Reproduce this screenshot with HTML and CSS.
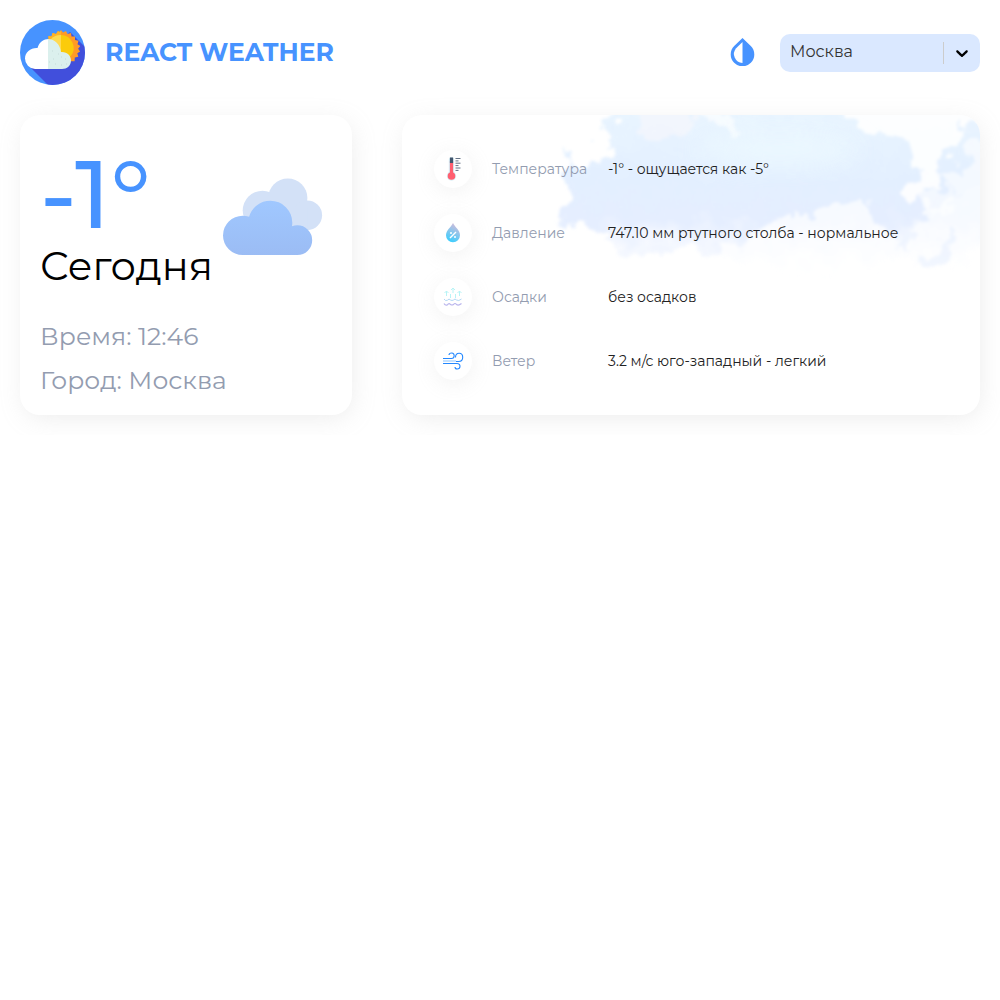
FILE: index.html
```html
<!DOCTYPE html>
<html lang="ru">
<head>
<meta charset="utf-8">
<title>React Weather</title>
<link rel="stylesheet" href="styles.css">
</head>
<body>
<header class="header">
  <div class="brand">
    <svg class="logo" viewBox="0 0 65 65">
      <defs><clipPath id="disc"><circle cx="32.5" cy="32.5" r="32.5"/></clipPath></defs>
      <g clip-path="url(#disc)">
        <rect width="65" height="65" fill="#4793ff"/>
        <path d="M11 48 28 65H65V27L50 12Z" fill="#414fdc"/>
        <path d="M41 10l2 2.500 3-1.500 1.500 3 3.500-1 .5 3.500 3.500 0 0 3.500 3.500.8-1 3.500 2.800 1.800-2.200 2.700 2 2.700-2.800 1.800 1 3.500-3.500.8-.2 3.700H28.500V16l3 .5 1-3.500 3.500 1 2-3 2 1Z" fill="#ff9b26"/>
        <path d="M41 10V30H28.500V16l3 .5 1-3.500 3.500 1 2-3 2 1Z" fill="#ffb327"/>
        <path d="M41 15a13 13 0 0 1 9.500 21.500L37 38Z" fill="#fbcb0b"/>
        <path d="M31 19A13 13 0 0 1 41 15V32H29Z" fill="#ffda52"/>
        <path d="M15 49A10.500 10.500 0 0 1 5 38.500C5 32 11 27.500 17.500 28 19 22 24 19 28.500 19V49Z" fill="#fff"/>
        <path d="M28 19c7 0 12 5.500 13 13 6-.5 10 3.500 10 8.500S47 49 42 49H28Z" fill="#dbf0ed"/>
        <path d="M32 31h1m5 3h1m-6 5h1m7-2h1m3 2h1m-11 5h1m-7-2h1m11 3h1m4-1h1" stroke="#c5dcd9" stroke-width="1"/>
      </g>
    </svg>
    <h1 class="title">REACT WEATHER</h1>
  </div>
  <div class="controls">
    <svg class="drop" viewBox="0 0 24 28"><path d="M12 0 20.300 8.100A11.800 11.800 0 1 1 3.700 8.100Z" fill="#4793ff"/><path d="M12 4V25A9 9 0 0 1 5.600 10.200Z" fill="#fff"/></svg>
    <div class="select">
      <span class="select-value">Москва</span>
      <span class="separator"></span>
      <span class="arrow"><svg width="20" height="20" viewBox="0 0 20 20"><path d="M4.516 7.548c.436-.446 1.043-.481 1.576 0L10 11.295l3.908-3.747c.533-.481 1.141-.446 1.574 0 .436.445.408 1.197 0 1.615-.406.418-4.695 4.502-4.695 4.502a1.095 1.095 0 0 1-1.576 0S4.924 9.581 4.516 9.163s-.436-1.170 0-1.615z"/></svg></span>
    </div>
  </div>
</header>
<main class="main">
  <section class="card today">
    <div class="top">
      <div class="reading">
        <div class="temp">-1°</div>
        <div class="day">Сегодня</div>
      </div>
      <svg class="clouds" viewBox="0 0 100 78">
        <defs>
          <linearGradient id="cloud" x1="0" y1="0" x2="0" y2="1"><stop stop-color="#a0c8ff"/><stop offset="1" stop-color="#9bbcf4"/></linearGradient>
          <clipPath id="front"><circle cx="19.700" cy="57.400" r="19.700"/><circle cx="47.300" cy="44.700" r="22"/><circle cx="74.300" cy="62.200" r="14.900"/><path d="M19.700 77.100V52H74.300V77.100Z"/></clipPath>
        </defs>
        <g fill="#d3e1f7"><circle cx="39.500" cy="32.500" r="19.800"/><circle cx="64.800" cy="20" r="19.600"/><circle cx="84.200" cy="37.300" r="14.900"/><path d="M40 30H84.200V52.200H40Z"/></g>
        <rect y="22" width="90" height="56" fill="url(#cloud)" clip-path="url(#front)"/>
      </svg>
    </div>
    <div class="meta time">Время: 12:46</div>
    <div class="meta city">Город: Москва</div>
  </section>
  <section class="card details">
    <svg class="sky" viewBox="0 0 430 185">
      <defs>
        <linearGradient id="air" x1="0" y1="0" x2="0" y2="1"><stop stop-color="#eaf6ff"/><stop offset=".45" stop-color="#e3efff"/><stop offset=".68" stop-color="#e5eeff"/><stop offset=".82" stop-color="#f3f7ff"/><stop offset=".95" stop-color="#fdfeff"/></linearGradient>
        <filter id="ragged" x="-10%" y="-20%" width="120%" height="140%" color-interpolation-filters="sRGB"><feTurbulence type="fractalNoise" baseFrequency=".055" numOctaves="5" seed="12"/><feDisplacementMap in="SourceGraphic" scale="36" xChannelSelector="R" yChannelSelector="G"/><feGaussianBlur stdDeviation="1.700"/></filter>
        <filter id="soft" x="-30%" y="-60%" width="160%" height="220%"><feGaussianBlur stdDeviation="12"/></filter>
      </defs>
      <g filter="url(#ragged)">
        <path d="M70-15H445V125L405 158 350 142 300 158 235 160 180 142 150 132 110 134 70 138 50 112 8 108 20 84 12 34 26 42 40 56 62 43 54 25Z" fill="url(#air)"/>
        <path d="M276-15 305 8 330 20 352 26 362 38 366 61 354 78 366 88 392 65 400 30 430 8V-15Z" fill="#fff" opacity=".88"/>
        <path d="M78-15 88 4 84 18 100 26 128 24 135 5 145 2 155-15Z" fill="#fcf8fc" opacity=".5"/>
        <path d="M148-15 155 4 170 15 190 24 200 15 181 2 165-15Z" fill="#fff" opacity=".65"/>
        <path d="M210 114 250 98 265 100 285 88 318 80 325 109 340 120 366 106 382 92 400 82 445 70V175H180L188 145 160 138Z" fill="#fff" opacity=".68"/>
        <path d="M410 32 445 18V75L407 78 395 62 423 50Z" fill="#fff" opacity=".6"/>
        <path d="M365 85 400 70 410 85 380 100Z" fill="#fff" opacity=".55"/>
        <path d="M345 95 368 104 360 136 345 125ZM376 140 405 115 400 148 382 156Z" fill="#e8f0ff" opacity=".6"/>
        <path d="M415 8 425 20 440 28V10Z" fill="#e8f3ff"/>
      </g>
      <ellipse cx="230" cy="35" rx="80" ry="17" fill="#edfaff" opacity=".75" filter="url(#soft)"/>
    </svg>
    <div class="rows">
      <div class="row">
        <span class="icon"><svg width="22" height="26" viewBox="0 0 22 26"><path d="M9.500 4v16" stroke="#d9eff7" stroke-width="5.400" stroke-linecap="round"/><circle cx="9.500" cy="20" r="4.700" fill="#d9eff7"/><path d="M9.500 5v15" stroke="#ff5f70" stroke-width="3.200"/><circle cx="9.500" cy="20" r="3.800" fill="#ff5f70"/><path d="M9.500 1.500v5.500" stroke="#42566d" stroke-width="3.200"/><path d="M13.500 2.500h5m-5 2.400h3m-3 2.300h5m-5 2.400h3m-3 2.400h5m-5 2.400h3" stroke="#657386"/></svg></span>
        <span class="name">Температура</span><span class="value">-1° - ощущается как -5°</span>
      </div>
      <div class="row">
        <span class="icon"><svg width="16" height="20" viewBox="0 0 16 20"><defs><linearGradient id="water" x1=".7" y1="0" x2=".3" y2="1"><stop stop-color="#d7bad9"/><stop offset=".5" stop-color="#87c6ed"/><stop offset="1" stop-color="#37ceff"/></linearGradient></defs><path d="M8 0c2 4 7 7.500 7 12.200a7 7 0 0 1-14 0C1 7.500 6 4 8 0Z" fill="url(#water)"/><path d="m5 15 6-6M5 10h2m2 4h2" stroke="#fff" stroke-width="1.400"/></svg></span>
        <span class="name">Давление</span><span class="value">747.10 мм ртутного столба - нормальное</span>
      </div>
      <div class="row">
        <span class="icon"><svg width="20" height="20" viewBox="0 0 20 20" fill="none"><path d="M3.500 9V4m-2 2 2-2 2 2M10 6V1M8 3l2-2 2 2m4.500 6V4m-2 2 2-2 2 2M7.500 11V7m5 4V7" stroke="#b8f4f6"/><path d="M1 12q1.500 2.500 3.500 1.200Q6 11 7.500 13q1.500 1 3 0Q12 11 13.500 13q2 1.500 5-1" stroke="#b3d7f4"/><path d="M1 16.500q1.500 2.500 3.500 1.200Q6 15.500 7.500 17.500q1.500 1 3 0 1.500-2 3 0 2 1.500 5-1" stroke="#bbb7ed" stroke-width="1.200"/></svg></span>
        <span class="name">Осадки</span><span class="value">без осадков</span>
      </div>
      <div class="row">
        <span class="icon"><svg width="22" height="20" viewBox="0 0 22 20" fill="none"><path d="M1 10h13" stroke="#b1d7ff" stroke-width="1.500"/><path d="M1 7.500h8.500c3.500 0 3.500-5.500.3-5.500-1.800 0-2.800 1-2.800 2M13.500 6.500c0-5.800 7.200-5.500 7.200-.3 0 2.500-1.700 4.300-4.200 4.300H14M1 12.500h14c4.200 0 3.700 5.500.2 5.500-1.600 0-2.200-1-2.200-2" stroke="#2488ff" stroke-width="1.100"/></svg></span>
        <span class="name">Ветер</span><span class="value">3.2 м/с юго-западный - легкий</span>
      </div>
    </div>
  </section>
</main>
</body>
</html>
```
FILE: styles.css
```css
* { box-sizing: border-box; }
body { margin: 0; padding: 20px; background: #fff; color: #000; font-family: Montserrat, Inter, sans-serif; }
.header { display: flex; align-items: center; justify-content: space-between; height: 65px; }
.brand { display: flex; align-items: center; gap: 20px; }
.logo { width: 65px; height: 65px; }
.title { margin: 0; padding-bottom: 1px; color: #4793ff; font-size: 25px; line-height: 30px; font-weight: 700; white-space: nowrap; }
.controls { display: flex; align-items: center; gap: 25px; }
.drop { width: 25px; height: 28px; margin-bottom: 2px; }
.select { display: flex; align-items: center; width: 200px; height: 38px; padding-left: 10px; border-radius: 10px; background: #dae8ff; }
.select-value { flex: 1; padding-bottom: 3px; color: #333; font-size: 16px; font-weight: 400; }
.separator { width: 1px; height: 22px; background: #ccc; }
.arrow { display: flex; justify-content: center; width: 36px; }
.arrow svg { width: 20px; height: 20px; }
.main { display: flex; gap: 50px; margin-top: 30px; }
.card { height: 300px; border-radius: 20px; background: #fff; box-shadow: 2px 5px 25px -3px rgba(180,180,180,.25); }
.today { width: 332px; padding: 20px; white-space: nowrap; }
.top { display: flex; justify-content: space-between; height: 162px; }
.reading { width: 174px; }
.temp { height: 110px; color: #4793ff; font-size: 96px; line-height: 117px; font-weight: 500; }
.day { font-size: 40px; line-height: 41px; font-weight: 400; }
.clouds { flex: none; width: 100px; height: 78px; margin: 43px 9px 0 0; }
.meta { color: #939cb0; font-size: 25px; line-height: 30px; font-weight: 400; }
.time { margin-top: 24px; }
.city { margin-top: 14px; }
.details { position: relative; width: 578px; }
.sky { position: absolute; top: 0; right: 0; width: 430px; height: 185px; overflow: hidden; border-top-right-radius: 20px; }
.rows { position: relative; display: grid; gap: 26px; padding: 35px 32px; }
.row { display: flex; align-items: center; height: 38px; font-size: 14px; line-height: 18px; font-weight: 400; white-space: nowrap; }
.icon { display: flex; align-items: center; justify-content: center; width: 38px; height: 38px; margin-right: 20px; border-radius: 50%; background: #fff; box-shadow: 1px 4px 20px rgba(180,180,180,.16); }
.name { width: 116px; color: #939cb0; }
.value { color: #222; }
```
